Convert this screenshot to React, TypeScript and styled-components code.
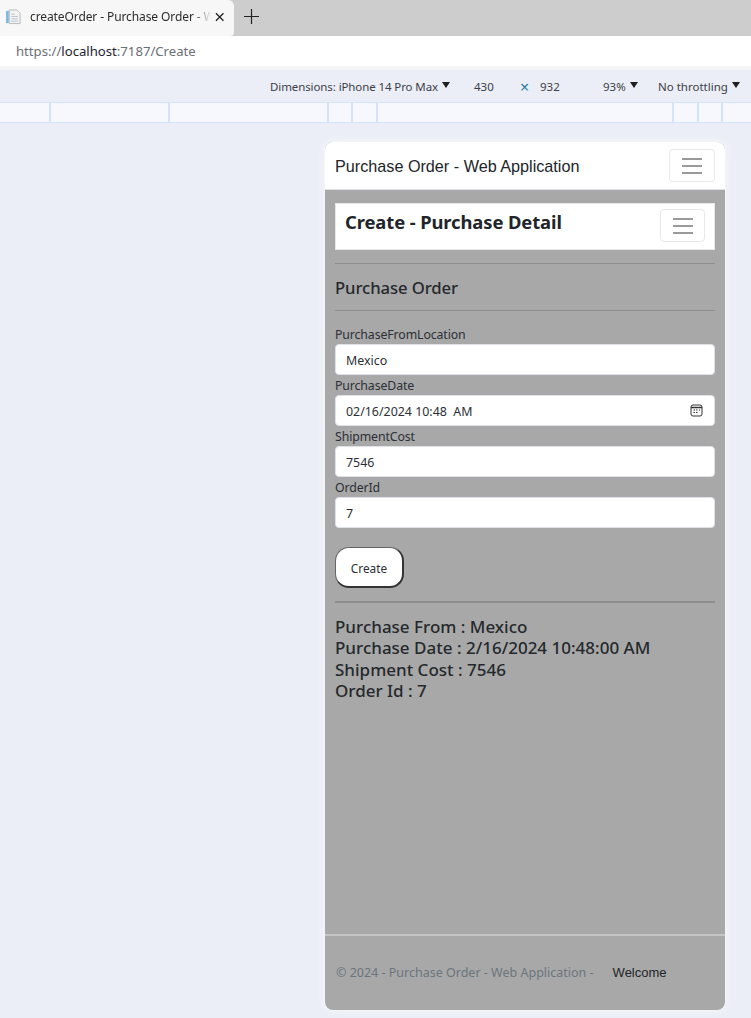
import React from 'react';
import styled, { createGlobalStyle } from 'styled-components';

const GlobalStyle = createGlobalStyle`
    html, body { margin: 0; padding: 0; background: #ebeef6; }
    body { font-family: "Noto Sans", "Open Sans", sans-serif; overflow: hidden; }
    * { box-sizing: border-box; }
`;

const Page = styled.div`
    width: 751px;
    height: 1018px;
    display: flex;
    flex-direction: column;
    overflow: hidden;
`;

const TabStrip = styled.div`
    height: 36px;
    background: #cdcdcd;
    display: flex;
    align-items: stretch;
`;

const Tab = styled.div`
    width: 234px;
    background: #f7f7f7;
    border-top-right-radius: 6px;
    border-bottom-right-radius: 4px;
    display: flex;
    align-items: center;
    padding: 0 10px 3px 6px;
    font-size: 12px;
    color: #2b2b2b;
`;

const TabTitle = styled.span`
    flex: 1;
    margin-left: 9px;
    line-height: 17px;
    white-space: nowrap;
    letter-spacing: -0.1px;
    -webkit-mask-image: linear-gradient(to right, #000 88%, transparent 98%);
    mask-image: linear-gradient(to right, #000 88%, transparent 98%);
`;

const NewTab = styled.div`
    width: 34px;
    display: flex;
    align-items: center;
    justify-content: center;
    padding-bottom: 4px;
`;

const AddressBar = styled.div`
    height: 30px;
    background: #fff;
    padding: 0 0 0 16px;
    display: flex;
    align-items: center;
    font-size: 13.15px;
    color: #6b6f76;
`;

const Host = styled.span`
    color: #1f2430;
`;

const ToolbarGap = styled.div`
    height: 4px;
    background: #f5f5f5;
`;

const DeviceToolbar = styled.div`
    height: 32px;
    background: #ebeef6;
    display: flex;
    align-items: center;
    padding-left: 270px;
    font-size: 11.5px;
    color: #3d4046;
    white-space: nowrap;
`;

const ToolItem = styled.span<{ $width: number; $tight?: boolean }>`
    width: ${p => p.$width}px;
    display: flex;
    align-items: center;
    flex-shrink: 0;
    letter-spacing: ${p => (p.$tight ? '-0.1px' : '0')};
`;

const Caret = styled.i`
    display: inline-block;
    width: 0;
    height: 0;
    margin: 0 0 3px 4px;
    border-left: 4.5px solid transparent;
    border-right: 4.5px solid transparent;
    border-top: 6px solid #1e1e1e;
`;

const Times = styled.span`
    color: #2a7f9e;
    font-size: 16px;
    line-height: 16px;
    margin-top: 2px;
`;

const Ruler = styled.div`
    height: 21px;
    background: #f6f8fe;
    border-top: 1px solid #d5e2fb;
    border-bottom: 1px solid #d5e2fb;
    display: flex;
`;

const RulerCell = styled.div<{ $width: number }>`
    width: ${p => p.$width}px;
    border-right: 2px solid #d5e2fb;
    flex-shrink: 0;
`;

const Canvas = styled.div`
    flex: 1;
    display: flex;
    padding: 19px 0 0 325px;
`;

const Phone = styled.div`
    width: 400px;
    height: 868px;
    display: flex;
    flex-direction: column;
    border-radius: 8px;
    background: #a8a8a8;
    box-shadow: 0 0 0 1px #f3f4f8, 0 0 6px 2px #f4f5f9;
`;

const AppBar = styled.header`
    height: 48px;
    flex-shrink: 0;
    background: #fff;
    border-radius: 8px 8px 0 0;
    border-bottom: 1px solid #dee2e6;
    display: flex;
    align-items: center;
    justify-content: space-between;
    padding: 0 10px;
`;

const AppBarTitle = styled.span`
    margin-top: 1px;
    font-family: "Liberation Sans", Arial, sans-serif;
    font-size: 16.2px;
    color: #212529;
`;

const Toggler = styled.button<{ $width: number }>`
    width: ${p => p.$width}px;
    height: 33px;
    padding: 0;
    background: #fff;
    border: 1px solid #e8e8e8;
    border-radius: 4px;
    display: flex;
    align-items: center;
    justify-content: center;
`;

const Main = styled.main`
    flex: 1;
    padding: 13px 10px 0;
    display: flex;
    flex-direction: column;
`;

const SubBar = styled.div`
    height: 47px;
    background: #fff;
    border: 1px solid #e8e8e8;
    display: flex;
    justify-content: space-between;
    padding: 5px 9px 0 9px;
`;

const SubTitle = styled.h3`
    margin: 0;
    font-size: 18.4px;
    line-height: 26px;
    font-weight: 700;
    color: #212529;
    letter-spacing: -0.1px;
`;

const Rule = styled.hr<{ $thick?: boolean }>`
    width: 100%;
    margin: 0;
    border: 0;
    height: ${p => (p.$thick ? 2 : 1)}px;
    background: #8e8e8e;
`;

const TopRule = styled(Rule)`
    margin-top: 13px;
`;

const SectionTitle = styled.h4`
    margin: 0;
    padding: 12px 0 11px;
    font-size: 16.7px;
    line-height: 23px;
    font-weight: 500;
    color: #25282c;
    letter-spacing: -0.1px;
`;

const Form = styled.form`
    display: flex;
    flex-direction: column;
    padding-top: 15px;
`;

const FieldLabel = styled.label`
    display: block;
    font-size: 12.3px;
    line-height: 18px;
    color: #2c2f36;
    letter-spacing: -0.1px;
`;

const Field = styled.div`
    height: 31px;
    background: #fff;
    border: 1px solid #dee2e6;
    border-radius: 4px;
    display: flex;
    align-items: center;
    padding: 0 11px 0 10px;
    margin-bottom: 2px;
`;

const FieldValue = styled.input`
    flex: 1;
    min-width: 0;
    border: 0;
    padding: 1px 0 0;
    outline: 0;
    background: transparent;
    font: inherit;
    font-size: 12.4px;
    color: #2c2f36;
`;

const CreateButton = styled.button`
    align-self: flex-start;
    width: 69px;
    height: 41px;
    margin: 17px 0 13px;
    padding: 1px 0 0;
    background: #fff;
    border: 1px solid #666;
    border-right: 2px solid #333;
    border-bottom: 2px solid #333;
    border-radius: 14px;
    font: inherit;
    font-size: 11.8px;
    color: #2c2f36;
`;

const Summary = styled.div`
    padding-top: 13px;
    font-size: 17px;
    line-height: 21.3px;
    font-weight: 500;
    color: #25282c;
`;

const Footer = styled.footer`
    height: 76px;
    flex-shrink: 0;
    border-top: 2px solid #c4c4c4;
    border-radius: 0 0 8px 8px;
    display: flex;
    align-items: center;
    padding: 0 10px 2px 11px;
    font-size: 12.5px;
    color: #6c757d;
`;

const FooterLink = styled.a`
    margin-left: 19px;
    font-family: "Liberation Sans", Arial, sans-serif;
    font-size: 13px;
    color: #212529;
`;

const PageIcon = () => (
    <svg width="16" height="16" viewBox="0 0 16 16" aria-hidden="true">
        <path d="M0 1.5h3v13H0z" fill="#7fb9e2" />
        <path d="M3.5.5h8l3.5 3.5v11h-11.500z" fill="#f3f3f3" stroke="#b9b9b9" />
        <path d="M5.500 5h4M5.500 7.500h7M5.500 10h7M5.500 12.500h7" stroke="#b5c3cf" />
    </svg>
);

const CloseIcon = () => (
    <svg width="10" height="10" viewBox="0 0 10 10" aria-hidden="true">
        <path d="M1 1l8 8M9 1L1 9" stroke="#1c1c1c" strokeWidth="1.300" />
    </svg>
);

const PlusIcon = () => (
    <svg width="15" height="15" viewBox="0 0 15 15" aria-hidden="true">
        <path d="M7.500 0v15M0 7.500h15" stroke="#222" strokeWidth="1.200" />
    </svg>
);

const BurgerIcon = () => (
    <svg width="20" height="16" viewBox="0 0 20 16" aria-hidden="true">
        <path d="M0 1h20M0 8h20M0 15h20" stroke="#7a7a7a" strokeWidth="1.500" />
    </svg>
);

const CalendarIcon = () => (
    <svg width="13" height="13" viewBox="0 0 13 13" aria-hidden="true">
        <rect x="1" y="1" width="11" height="11" rx="2" fill="none" stroke="#333" strokeWidth="1" />
        <path d="M1 3.500h11" stroke="#333" strokeWidth="1.500" />
        <path d="M3.500 6h1.500M6 6h1.500M9 6h1M3.500 8.500h1.500M6 8.500h1.500" stroke="#333" strokeWidth="1" />
    </svg>
);

const rulerCells = [51, 119, 159, 24, 25, 296, 25, 24];

const fields = [
    { label: 'PurchaseFromLocation', value: 'Mexico' },
    { label: 'PurchaseDate', value: '02/16/2024 10:48  AM', calendar: true },
    { label: 'ShipmentCost', value: '7546' },
    { label: 'OrderId', value: '7' },
];

const App = () => (
    <Page>
        <GlobalStyle />
        <TabStrip>
            <Tab>
                <PageIcon />
                <TabTitle>createOrder - Purchase Order - W</TabTitle>
                <CloseIcon />
            </Tab>
            <NewTab><PlusIcon /></NewTab>
        </TabStrip>
        <AddressBar>https://<Host>localhost</Host>:7187/Create</AddressBar>
        <ToolbarGap />
        <DeviceToolbar>
            <ToolItem $width={204} $tight>Dimensions: iPhone 14 Pro Max<Caret /></ToolItem>
            <ToolItem $width={46}>430</ToolItem>
            <ToolItem $width={20}><Times>×</Times></ToolItem>
            <ToolItem $width={63}>932</ToolItem>
            <ToolItem $width={55}>93%<Caret /></ToolItem>
            <ToolItem $width={93}>No throttling<Caret /></ToolItem>
        </DeviceToolbar>
        <Ruler>
            {rulerCells.map((width, i) => <RulerCell key={i} $width={width} />)}
        </Ruler>
        <Canvas>
            <Phone>
                <AppBar>
                    <AppBarTitle>Purchase Order - Web Application</AppBarTitle>
                    <Toggler $width={46}><BurgerIcon /></Toggler>
                </AppBar>
                <Main>
                    <SubBar>
                        <SubTitle>Create - Purchase Detail</SubTitle>
                        <Toggler $width={45}><BurgerIcon /></Toggler>
                    </SubBar>
                    <TopRule />
                    <SectionTitle>Purchase Order</SectionTitle>
                    <Rule />
                    <Form>
                        {fields.map(field => (
                            <div key={field.label}>
                                <FieldLabel>{field.label}</FieldLabel>
                                <Field>
                                    <FieldValue readOnly value={field.value} />
                                    {field.calendar && <CalendarIcon />}
                                </Field>
                            </div>
                        ))}
                        <CreateButton type="button">Create</CreateButton>
                    </Form>
                    <Rule $thick />
                    <Summary>
                        <div>Purchase From : Mexico</div>
                        <div>Purchase Date : 2/16/2024 10:48:00 AM</div>
                        <div>Shipment Cost : 7546</div>
                        <div>Order Id : 7</div>
                    </Summary>
                </Main>
                <Footer>
                    © 2024 - Purchase Order - Web Application -
                    <FooterLink>Welcome</FooterLink>
                </Footer>
            </Phone>
        </Canvas>
    </Page>
);

export default App;
